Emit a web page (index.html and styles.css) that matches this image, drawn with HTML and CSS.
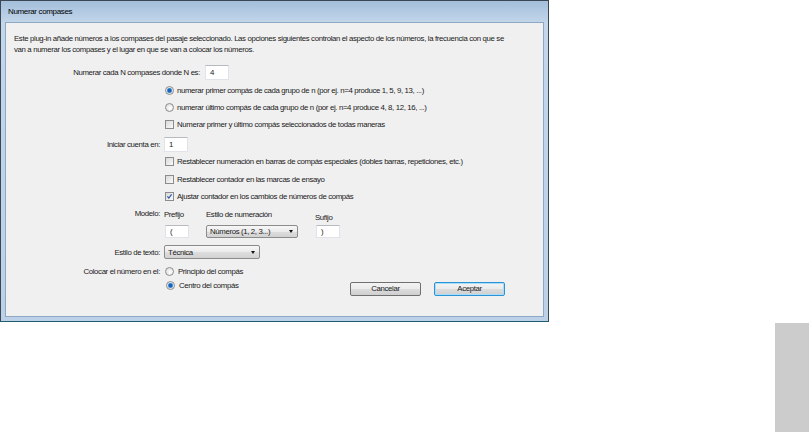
FILE: index.html
```
<!DOCTYPE html>
<html lang="es">
<head>
    <meta charset="UTF-8">
    <meta name="viewport" content="width=device-width, initial-scale=1.0">
    <title>Numerar compases</title>
    <link rel="stylesheet" href="styles.css">
</head>
<body>
    <div class="dialog">
        <div class="titlebar">Numerar compases</div>
        <div class="content">
            <p class="intro">Este plug-in añade números a los compases del pasaje seleccionado. Las opciones siguientes controlan el aspecto de los números, la frecuencia con que se<br>van a numerar los compases y el lugar en que se van a colocar los números.</p>

            <!-- cada N compases -->
            <div class="row every">
                <span class="every-label">Numerar cada N compases donde N es:</span>
                <span class="field">4</span>
            </div>
            <div class="row h20 indent">
                <span class="radio on"></span>numerar primer compás de cada grupo de n (por ej. n=4 produce 1, 5, 9, 13, ...)
            </div>
            <div class="row h14 indent">
                <span class="radio"></span>numerar último compás de cada grupo de n (por ej. n=4 produce 4, 8, 12, 16, ...)
            </div>
            <div class="row h20 indent">
                <span class="check"></span>Numerar primer y último compás seleccionados de todas maneras
            </div>

            <!-- inicio de cuenta -->
            <div class="row h20">
                <span class="label">Iniciar cuenta en:</span>
                <span class="field">1</span>
            </div>
            <div class="row h15 indent">
                <span class="check"></span>Restablecer numeración en barras de compás especiales (dobles barras, repeticiones, etc.)
            </div>
            <div class="row h20 indent">
                <span class="check"></span>Restablecer contador en las marcas de ensayo
            </div>
            <div class="row h14 indent">
                <span class="check on"><svg viewBox="0 0 9 9"><path d="M1.8 4.4 L3.6 6.6 L7.2 1.8" /></svg></span>Ajustar contador en los cambios de números de compás
            </div>

            <!-- modelo -->
            <div class="model">
                <span class="label model-label">Modelo:</span>
                <div class="model-grid">
                    <span>Prefijo</span>
                    <span>Estilo de numeración</span>
                    <span class="suffix-label">Sufijo</span>
                    <span class="field small">(</span>
                    <span class="combo numbering">Números (1, 2, 3...)</span>
                    <span class="field small">)</span>
                </div>
            </div>

            <div class="row h28">
                <span class="label">Estilo de texto:</span>
                <span class="combo text-style">Técnica</span>
            </div>

            <!-- posición -->
            <div class="row h10">
                <span class="label">Colocar el número en el:</span>
                <span class="radio gap"></span>Principio del compás
            </div>
            <div class="row h18 indent last">
                <span class="radio on gap"></span>Centro del compás
                <div class="actions">
                    <span class="btn">Cancelar</span>
                    <span class="btn default">Aceptar</span>
                </div>
            </div>
        </div>
    </div>
    <div class="side-block"></div>
</body>
</html>
```

FILE: styles.css
```
html,
body {
    margin: 0;
    height: 100%;
}

body {
    display: flex;
    flex-direction: column;
    background-color: #fff;
    font-family: "Liberation Sans", Arial, sans-serif;
    font-size: 7.8px;
    letter-spacing: -0.35px;
    color: #1a1a1a;
}

/* ventana */
.dialog {
    flex: none;
    width: 549px;
    height: 322px;
    box-sizing: border-box;
    display: flex;
    flex-direction: column;
    padding: 0 4px 4px;
    border: 1px solid #3b4754;
    border-bottom-color: #1d5e6f;
    background: linear-gradient(#a4bfdb, #c3d6ea 22px, #bcd1e7);
}

.titlebar {
    height: 21px;
    line-height: 21px;
    padding-left: 3px;
    font-size: 8px;
    color: #000;
}

.content {
    flex: 1;
    padding: 10px 8px 0;
    background-color: #f0f0f0;
    border: 1px solid #8ea8c4;
}

.intro {
    margin: 0;
    line-height: 11px;
    white-space: nowrap;
}

/* filas */
.row {
    display: flex;
    align-items: center;
    white-space: nowrap;
}

.h10 { height: 10px; }
.h14 { height: 14px; }
.h15 { height: 15px; }
.h18 { height: 18px; }
.h20 { height: 20px; }
.h28 { height: 28px; }

.indent {
    padding-left: 151px;
}

.every {
    height: 16px;
    margin-top: 9px;
}

.every-label {
    width: 186px;
    margin-right: 5px;
    text-align: right;
}

.label {
    flex: none;
    width: 146px;
    margin-right: 4px;
    text-align: right;
}

/* controles */
.radio,
.check {
    flex: none;
    width: 9px;
    height: 9px;
    box-sizing: border-box;
    margin-right: 3px;
    border: 1px solid #8c8c8c;
}

.radio {
    border-radius: 50%;
    background: radial-gradient(circle at 60% 60%, #fff, #d6d6d6);
}

.radio.on {
    background: radial-gradient(circle, #1a63b5 0 1.6px, #6fa9e2 2.4px, #f4f4f4 3.2px, #dcdcdc);
}

.radio.gap {
    margin-left: 1px;
    margin-right: 4px;
}

.check {
    background: linear-gradient(135deg, #d9d9d9, #fafafa);
}

.check svg {
    display: block;
    width: 7px;
    height: 7px;
}

.check path {
    fill: none;
    stroke: #2c5aa5;
    stroke-width: 1.5;
}

.field {
    display: block;
    width: 24px;
    height: 15px;
    box-sizing: border-box;
    padding-left: 4px;
    line-height: 13px;
    background-color: #fff;
    border: 1px solid #e0e3e9;
    border-top-color: #b6b9c0;
}

.field.small {
    height: 13px;
    line-height: 11px;
    margin-left: 1px;
}

.combo {
    display: flex;
    align-items: center;
    justify-content: space-between;
    box-sizing: border-box;
    height: 13px;
    padding: 0 4px 0 3px;
    border: 1px solid #8b8b8b;
    border-radius: 2px;
    background: linear-gradient(#f7f7f7, #ebebeb 50%, #dedede 51%, #d2d2d2);
}

.combo::after {
    content: "";
    border-left: 2.5px solid transparent;
    border-right: 2.5px solid transparent;
    border-top: 3px solid #111;
}

.numbering {
    width: 92px;
}

.text-style {
    width: 96px;
    height: 14px;
}

/* modelo */
.model {
    display: flex;
    height: 35px;
}

.model-label {
    line-height: 22px;
}

.model-grid {
    display: grid;
    grid-template-columns: 42px 109px 25px;
    grid-template-rows: 22px 13px;
    align-items: center;
}

.suffix-label {
    padding-top: 7px;
}

/* botones */
.actions {
    display: flex;
    gap: 13px;
    margin: 8px 30px 0 auto;
}

.btn {
    width: 71px;
    height: 14px;
    box-sizing: border-box;
    line-height: 12px;
    text-align: center;
    border: 1px solid #707070;
    border-radius: 2px;
    background: linear-gradient(#f3f3f3, #ebebeb 50%, #dddddd 51%, #cfcfcf);
}

.btn.default {
    border-color: #2a93d6;
    box-shadow: inset 0 0 0 1px #a9def8;
}

.side-block {
    flex: 1;
    align-self: flex-end;
    width: 34px;
    margin-top: 1px;
    background-color: #ccc;
}
```
